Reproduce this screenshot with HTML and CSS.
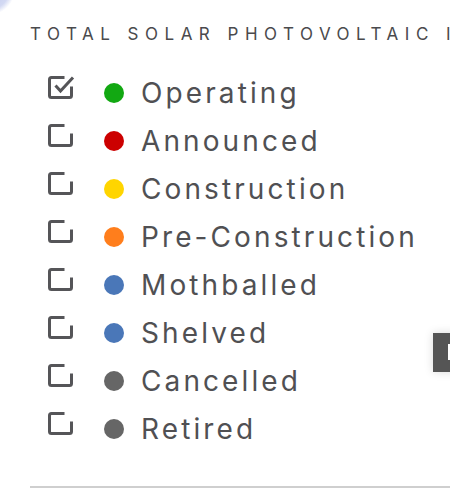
FILE: index.html
```html
<!DOCTYPE html>
<html>
<head>
<meta charset="utf-8">
<link rel="stylesheet" href="styles.css">
</head>
<body>
<div class="corner"></div>
<div class="panel">
  <h2 class="title">TOTAL SOLAR PHOTOVOLTAIC INSTALLATIONS</h2>
  <ul class="legend">
    <li class="row">
      <svg class="cb" viewBox="0 0 28 26" width="28" height="26"><path d="M17.5 2.5H4.5Q2.5 2.5 2.5 4.5V20.5Q2.5 22.5 4.5 22.5H22.5Q24.5 22.5 24.5 20.5V11.5"/><path d="M8.5 10.5L13.5 16L26 2.5"/></svg>
      <span class="dot green"></span><span class="label">Operating</span>
    </li>
    <li class="row">
      <svg class="cb" viewBox="0 0 28 26" width="28" height="26"><path d="M17.5 2.5H4.5Q2.5 2.5 2.5 4.5V20.5Q2.5 22.5 4.5 22.5H22.5Q24.5 22.5 24.5 20.5V10.5"/></svg>
      <span class="dot red"></span><span class="label">Announced</span>
    </li>
    <li class="row">
      <svg class="cb" viewBox="0 0 28 26" width="28" height="26"><path d="M17.5 2.5H4.5Q2.5 2.5 2.5 4.5V20.5Q2.5 22.5 4.5 22.5H22.5Q24.5 22.5 24.5 20.5V10.5"/></svg>
      <span class="dot yellow"></span><span class="label">Construction</span>
    </li>
    <li class="row">
      <svg class="cb" viewBox="0 0 28 26" width="28" height="26"><path d="M17.5 2.5H4.5Q2.5 2.5 2.5 4.5V20.5Q2.5 22.5 4.5 22.5H22.5Q24.5 22.5 24.5 20.5V10.5"/></svg>
      <span class="dot orange"></span><span class="label">Pre-Construction</span>
    </li>
    <li class="row">
      <svg class="cb" viewBox="0 0 28 26" width="28" height="26"><path d="M17.5 2.5H4.5Q2.5 2.5 2.5 4.5V20.5Q2.5 22.5 4.5 22.5H22.5Q24.5 22.5 24.5 20.5V10.5"/></svg>
      <span class="dot blue"></span><span class="label">Mothballed</span>
    </li>
    <li class="row">
      <svg class="cb" viewBox="0 0 28 26" width="28" height="26"><path d="M17.5 2.5H4.5Q2.5 2.5 2.5 4.5V20.5Q2.5 22.5 4.5 22.5H22.5Q24.5 22.5 24.5 20.5V10.5"/></svg>
      <span class="dot blue"></span><span class="label">Shelved</span>
    </li>
    <li class="row">
      <svg class="cb" viewBox="0 0 28 26" width="28" height="26"><path d="M17.5 2.5H4.5Q2.5 2.5 2.5 4.5V20.5Q2.5 22.5 4.5 22.5H22.5Q24.5 22.5 24.5 20.5V10.5"/></svg>
      <span class="dot gray"></span><span class="label">Cancelled</span>
    </li>
    <li class="row">
      <svg class="cb" viewBox="0 0 28 26" width="28" height="26"><path d="M17.5 2.5H4.5Q2.5 2.5 2.5 4.5V20.5Q2.5 22.5 4.5 22.5H22.5Q24.5 22.5 24.5 20.5V10.5"/></svg>
      <span class="dot gray"></span><span class="label">Retired</span>
    </li>
  </ul>
  <hr class="rule">
</div>
<div class="handle"><span class="handle-inner"></span></div>
</body>
</html>
```

FILE: styles.css
```css
html, body {
  margin: 0;
  padding: 0;
  background: #ffffff;
  width: 450px;
  height: 490px;
  overflow: hidden;
}
body {
  position: relative;
  font-family: Inter, "Noto Sans", sans-serif;
  color: #505053;
}
.corner {
  position: absolute;
  left: -30px;
  top: -30px;
  width: 44px;
  height: 44px;
  border-radius: 50%;
  background: radial-gradient(circle at 40% 40%, #a9b6e8 0%, #c8d0f0 60%, rgba(255,255,255,0) 75%);
  opacity: 0.8;
}
.panel {
  padding: 0 0 0 30px;
}
.title {
  margin: 0;
  padding-top: 22px;
  font-size: 17px;
  line-height: 24px;
  font-weight: 400;
  letter-spacing: 6.5px;
  white-space: nowrap;
  overflow: hidden;
  color: #4a4a4d;
}
.legend {
  list-style: none;
  margin: 23px 0 0 0;
  padding: 0;
}
.row {
  display: flex;
  align-items: center;
  height: 48px;
  padding-left: 17px;
}
.cb {
  flex: none;
  fill: none;
  stroke: #555558;
  stroke-width: 3;
  stroke-linecap: butt;
  stroke-linejoin: miter;
  margin-top: -10px;
}
.dot {
  flex: none;
  width: 20px;
  height: 20px;
  border-radius: 50%;
  margin-left: 29px;
  margin-right: 17px;
}
.green { background: #12a812; }
.red { background: #cc0000; }
.yellow { background: #ffd500; }
.orange { background: #ff7e1c; }
.blue { background: #4a77b8; }
.gray { background: #666666; }
.label {
  font-size: 28px;
  letter-spacing: 3.1px;
  white-space: nowrap;
}
.rule {
  margin: 33px 0 0 0;
  border: 0;
  height: 2px;
  background: #cfcfcf;
}
.handle {
  position: absolute;
  left: 433px;
  top: 333px;
  width: 30px;
  height: 39px;
  background: #555555;
  box-shadow: 0 0 10px rgba(0,0,0,0.15);
}
.handle-inner {
  position: absolute;
  left: 15px;
  top: 11px;
  width: 8px;
  height: 16px;
  background: #ffffff;
}
```
